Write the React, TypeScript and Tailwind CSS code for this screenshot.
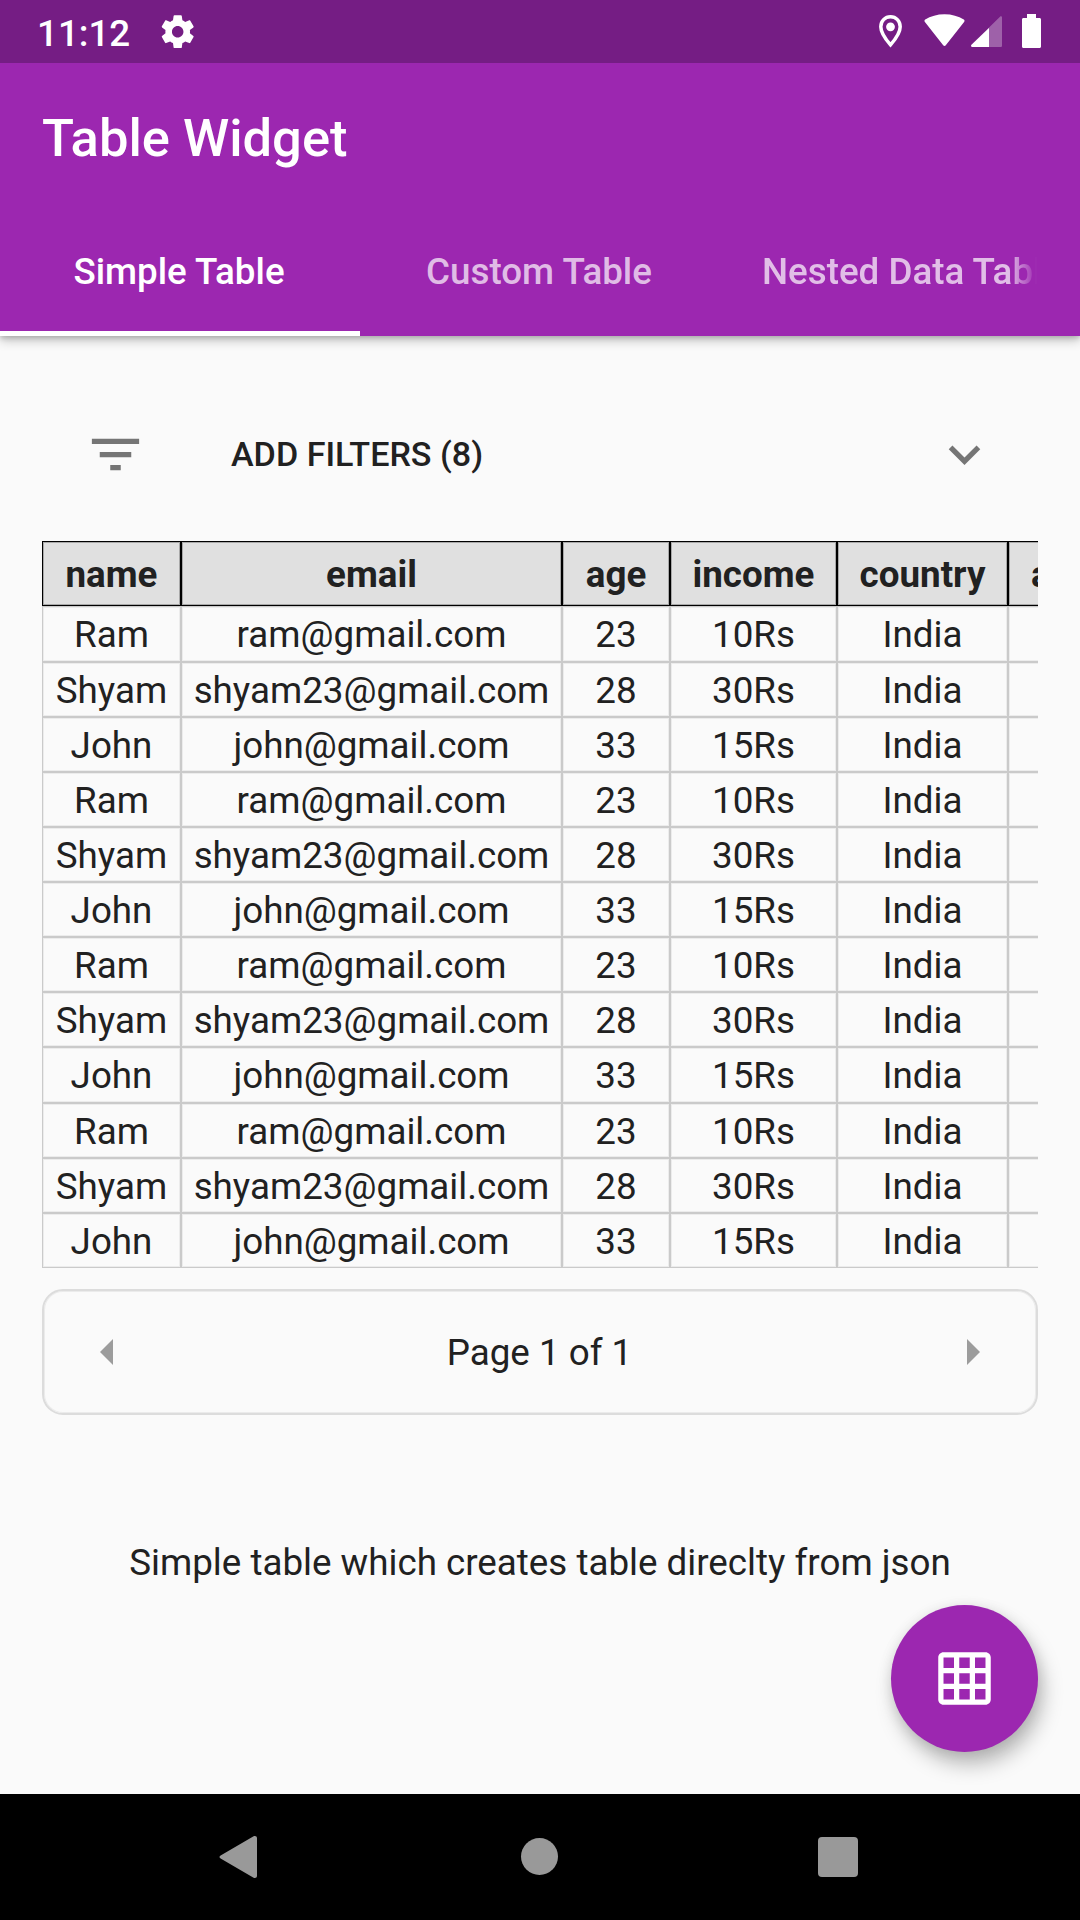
import { MdExpandMore, MdFilterList, MdGridOn } from "react-icons/md";

const people = [
  { name: "Ram", email: "ram@gmail.com", age: "23", income: "10Rs", country: "India" },
  { name: "Shyam", email: "shyam23@gmail.com", age: "28", income: "30Rs", country: "India" },
  { name: "John", email: "john@gmail.com", age: "33", income: "15Rs", country: "India" },
];
const rows = [...people, ...people, ...people, ...people];

const grid = "grid grid-cols-[139px_381px_108px_167px_171px_160px]";

function StatusBar() {
  return (
    <div className="flex h-[63px] items-center bg-[#751d84] text-white">
      <span className="ml-[37px] pt-[4px] text-[36.75px] leading-[59px] font-medium">11:12</span>
      <svg className="ml-[28px] size-[39.4px]" viewBox="0 0 24 24" fill="currentColor">
        <path d="M19.43 12.98c.04-.32.07-.64.07-.98s-.03-.66-.07-.98l2.11-1.65c.19-.15.24-.42.12-.64l-2-3.46c-.12-.22-.39-.3-.61-.22l-2.49 1c-.52-.4-1.08-.73-1.69-.98l-.38-2.65C14.46 2.18 14.25 2 14 2h-4c-.25 0-.46.18-.49.42l-.38 2.65c-.61.25-1.17.59-1.69.98l-2.49-1c-.23-.09-.49 0-.61.22l-2 3.46c-.13.22-.07.49.12.64l2.11 1.65c-.04.32-.07.65-.07.98s.03.66.07.98l-2.11 1.65c-.19.15-.24.42-.12.64l2 3.46c.12.22.39.3.61.22l2.49-1c.52.4 1.08.73 1.69.98l.38 2.65c.03.24.24.42.49.42h4c.25 0 .46-.18.49-.42l.38-2.65c.61-.25 1.17-.59 1.69-.98l2.49 1c.23.09.49 0 .61-.22l2-3.46c.12-.22.07-.49-.12-.64l-2.11-1.65zM12 15.5c-1.93 0-3.5-1.57-3.5-3.5s1.57-3.5 3.5-3.5 3.5 1.57 3.5 3.5-1.57 3.5-3.5 3.5z" />
      </svg>
      <svg className="ml-auto h-[33px] w-[23px]" viewBox="0 0 23 33" fill="none">
        <path
          d="M11.5 1.8C6 1.8 1.8 6 1.8 11.7c0 6.3 5.2 13 9.7 18.2 4.5-5.2 9.7-11.9 9.7-18.2C21.2 6 17 1.8 11.5 1.8z"
          stroke="currentColor"
          strokeWidth="3.5"
        />
        <circle cx="11.5" cy="11.8" r="4.4" fill="currentColor" />
      </svg>
      <svg className="mb-[3px] ml-[22px] h-[33px] w-[41px]" viewBox="0 0 41 33" fill="currentColor">
        <path d="M1.1 8.2C.2 7.4.3 6.3 1.2 5.6 6.6 2.3 13.1.3 20.5.3s13.9 2 19.3 5.3c.9.7 1 1.8.1 2.7L21.8 31.3c-.8.9-1.8.9-2.6 0z" />
      </svg>
      <svg className="ml-[6px] h-[31px] w-[31px]" viewBox="0 0 31 31" fill="currentColor">
        <path d="M18 12.8V31H1.5C.1 31-.4 29.7.5 28.7L29 .7C29.9-.1 31 .3 31 1.6V29.5c0 1-.5 1.5-1.5 1.5H18z" fillOpacity=".3" />
        <path d="M18 12V31H1.5C.1 31-.4 29.7.5 28.7z" />
      </svg>
      <svg className="mr-[39px] mb-[2px] ml-[20px] h-[34px] w-[19px]" viewBox="0 0 19 34" fill="currentColor">
        <path d="M5 0h9v4h3.5c.9 0 1.5.6 1.5 1.5v27c0 .9-.6 1.5-1.5 1.5h-16C.6 34 0 33.4 0 32.5v-27C0 4.6.6 4 1.5 4H5z" />
      </svg>
    </div>
  );
}

function AppBar() {
  return (
    <header className="relative z-10 bg-[#9c27b0] text-white shadow-[0_5px_10px_rgba(0,0,0,0.2),0_2px_5px_rgba(0,0,0,0.18)]">
      <StatusBar />
      <h1 className="h-[147px] pt-[2px] pl-[42px] text-[52.5px] leading-[147px] font-medium">Table Widget</h1>
      <nav className="grid h-[126px] grid-cols-3 text-[36.75px] leading-[119px] font-medium">
        <div className="border-b-[5px] border-white pt-[2px] pr-[2px] text-center">Simple Table</div>
        <div className="pt-[2px] pr-[2px] text-center text-white/70">Custom Table</div>
        <div className="px-[42px] pt-[2px] text-white/70">
          <div className="overflow-hidden whitespace-nowrap [mask-image:linear-gradient(to_right,black_calc(100%-29px),transparent_calc(100%-1px))]">
            Nested Data Table
          </div>
        </div>
      </nav>
    </header>
  );
}

function DataTable() {
  return (
    <div className="mx-[42px] overflow-hidden">
      <div className="w-[1126px] text-center text-[36.75px]">
        <div className={`${grid} h-[65.4px] bg-[#e0e0e0] leading-[66px] font-bold`}>
          {["name", "email", "age", "income", "country"].map((h) => (
            <div key={h} className="h-[65.4px] border border-black shadow-[inset_0_0_0_1px_#a8a8a8]">{h}</div>
          ))}
          <div className="h-[65.4px] border border-black pl-[22px] text-left shadow-[inset_0_0_0_1px_#a8a8a8]">area</div>
        </div>
        {rows.map((r, i) => (
          <div key={i} className={`${grid} h-[55.125px] leading-[55.4px]`}>
            {[r.name, r.email, r.age, r.income, r.country, ""].map((c, j) => (
              <div key={j} className="h-[55.125px] border border-[#cacaca] shadow-[inset_0_0_0_1px_#ececec]">{c}</div>
            ))}
          </div>
        ))}
      </div>
    </div>
  );
}

export default function App() {
  return (
    <div className="flex h-[1920px] w-[1080px] flex-col overflow-hidden bg-[#fafafa] font-['Roboto',sans-serif] text-[#212121]">
      <AppBar />
      <main className="relative flex-1">
        <div className="flex h-[205px] items-center pt-[32px] text-[34.125px]">
          <MdFilterList className="ml-[84px] size-[63px] text-[#757575]" />
          <span className="ml-[84px] pb-[2px] leading-[40px] font-medium">ADD FILTERS (8)</span>
          <MdExpandMore className="mr-[84px] ml-auto size-[63px] text-[#757575]" />
        </div>
        <DataTable />
        <div className="mx-[42px] mt-[21px] flex h-[126px] items-center justify-between rounded-[21px] border-2 border-[#dcdcdc] px-[56px] text-[36.75px] shadow-[inset_0_0_0_1px_#ebebeb]">
          <svg className="h-[26px] w-[13px]" viewBox="0 0 13 26" fill="#9c9c9c">
            <path d="M13 0v26L0 13z" />
          </svg>
          <span className="-ml-px pt-[2px]">Page 1 of 1</span>
          <svg className="h-[26px] w-[13px]" viewBox="0 0 13 26" fill="#9c9c9c">
            <path d="M0 0v26l13-13z" />
          </svg>
        </div>
        <p className="mt-[126px] text-center text-[36.75px] leading-[43px]">Simple table which creates table direclty from json</p>
        <button className="absolute right-[42px] bottom-[42px] flex size-[147px] items-center justify-center rounded-full bg-[#9c27b0] text-white shadow-[5px_13px_20px_rgba(0,0,0,0.25),0_2px_14px_rgba(0,0,0,0.1)]">
          <MdGridOn className="size-[63px]" />
        </button>
      </main>
      <footer className="flex h-[126px] items-center bg-black">
        <svg className="ml-[219px] h-[44px] w-[38px]" viewBox="0 0 38 44" fill="#999999">
          <path d="M1.6 20.4 34.6 1.3c1.7-.9 3.4 0 3.4 1.9v37.6c0 1.9-1.7 2.8-3.4 1.9L1.6 23.6c-1.5-.8-1.5-2.4 0-3.2z" />
        </svg>
        <div className="mb-[2px] ml-[264px] size-[37px] rounded-full bg-[#999999]" />
        <div className="ml-[260px] size-[40px] rounded-[4px] bg-[#999999]" />
      </footer>
    </div>
  );
}
